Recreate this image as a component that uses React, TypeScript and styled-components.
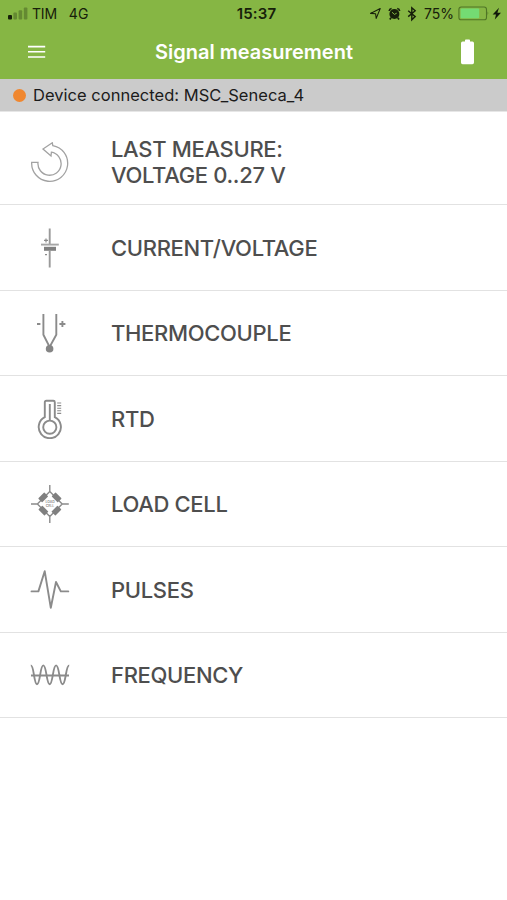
import React from 'react';
import styled, { createGlobalStyle } from 'styled-components';

const colors = {
  green: '#86b644',
  banner: '#cbcbcb',
  orange: '#f0872f',
  text: '#4e4e4e',
  icon: '#8b8b8b',
  line: '#e2e2e2',
};

const GlobalStyle = createGlobalStyle`
  * {
    box-sizing: border-box;
  }

  body {
    margin: 0;
    background: #fff;
    font-family: Inter, 'Liberation Sans', sans-serif;
  }

  svg {
    display: block;
    flex: none;
  }
`;

const Screen = styled.div`
  width: 507px;
  height: 900px;
  background: #fff;
  overflow: hidden;
`;

const Header = styled.header`
  height: 79px;
  background: ${colors.green};
`;

const StatusBar = styled.div`
  display: grid;
  grid-template-columns: 1fr auto 1fr;
  align-items: center;
  height: 27px;
  padding: 0 5px 0 8px;
  font-size: 14px;
  line-height: 27px;
  color: #17200a;
`;

const StatusGroup = styled.div<{ $end?: boolean }>`
  display: flex;
  align-items: center;
  justify-content: ${({ $end }) => ($end ? 'flex-end' : 'flex-start')};
`;

const Carrier = styled.span`
  margin-left: 4px;
  letter-spacing: -0.2px;
`;

const Network = styled.span`
  margin-left: 12px;
  letter-spacing: 0.2px;
`;

const Clock = styled.span`
  padding-left: 3px;
  font-size: 15px;
  font-weight: 600;
  letter-spacing: 0.2px;
`;

const Percent = styled.span`
  margin: 0 4px 0 7px;
`;

const NavBar = styled.nav`
  display: grid;
  grid-template-columns: 27px 1fr 27px;
  align-items: center;
  height: 51px;
  padding: 0 26px 2px;
`;

const IconButton = styled.button<{ $start?: boolean }>`
  display: flex;
  justify-content: ${({ $start }) => ($start ? 'flex-start' : 'center')};
  padding: 0 0 0 ${({ $start }) => ($start ? '2px' : '0')};
  border: 0;
  background: none;
`;

const Title = styled.h1`
  margin: 0;
  padding: 2px 0 0 1px;
  font-size: 20px;
  font-weight: 600;
  line-height: 47px;
  text-align: center;
  color: #fff;
`;

const Banner = styled.div`
  display: flex;
  align-items: center;
  gap: 7px;
  height: 33px;
  padding-left: 13px;
  border-bottom: 1px solid #e6e6e6;
  background: ${colors.banner};
  font-size: 16.5px;
  letter-spacing: 0.02px;
  color: #1b1b1b;
`;

const Dot = styled.span`
  width: 13px;
  height: 13px;
  border-radius: 50%;
  background: ${colors.orange};
`;

const List = styled.ul`
  margin: 0;
  padding: 0;
  list-style: none;
`;

const Row = styled.li<{ $tall?: boolean }>`
  display: flex;
  align-items: center;
  gap: 41px;
  height: ${({ $tall }) => ($tall ? '93px' : '85.5px')};
  padding: ${({ $tall }) => ($tall ? '8px' : '1px')} 30px 0;
  border-bottom: 1px solid ${colors.line};
`;

const Label = styled.span`
  font-size: 22px;
  font-weight: 500;
  line-height: 26px;
  letter-spacing: -0.33px;
  white-space: pre-line;
  color: ${colors.text};
`;

const Glyph = styled.svg.attrs({ width: 40, height: 40, viewBox: '0 0 40 40' })`
  fill: none;
  stroke: ${colors.icon};
  stroke-width: 1.9;
`;

const LastIcon = () => (
  <Glyph>
    <path
      strokeWidth="1.3"
      stroke="#a2a2a2"
      d="M1.7 20.3A18 18 0 1 0 22.8 3.6L22.3.8 13 7l8 7 .4-3.8A11.6 11.6 0 1 1 8 20.3Z"
    />
  </Glyph>
);

const CurrentIcon = () => (
  <Glyph>
    <path d="M19.7 .5V17M19.7 23V39.5" stroke="#9a9a9a" />
    <path d="M11 16.6H28.8" stroke="#a6a6a6" />
    <path d="M14 20.8H26" strokeWidth="4" stroke="#808080" />
    <path d="M14 12.4h4M16 10.4v4M15 26.7h2" strokeWidth="1.2" />
  </Glyph>
);

const ThermocoupleIcon = () => (
  <Glyph>
    <path d="M13.4 1V21.8L19.6 34 26.3 21.8V1" />
    <circle cx="19.6" cy="35.8" r="3.8" fill="#858585" stroke="none" />
    <path d="M7 11h3.4M29.4 11h6M32.4 8v6" />
  </Glyph>
);

const RtdIcon = () => (
  <Glyph>
    <path d="M14.8 18.2V3.2Q14.8 1.7 16.3 1.7H23.3Q24.8 1.7 24.8 3.2V18.2A11.1 11.1 0 1 1 14.8 18.2Z" />
    <circle cx="19.8" cy="28.2" r="6.6" />
    <path d="M19.8 5V21.5" />
    <path d="M27.2 4h4M27.2 6.6h4M27.2 9.2h4M27.2 11.8h4M27.2 14.4h4" strokeWidth="1.1" />
  </Glyph>
);

const CellText = styled.text`
  font-size: 3.4px;
  font-weight: 600;
  text-anchor: middle;
  fill: ${colors.icon};
  stroke: none;
`;

const resistors = [
  { x: 13.2, y: 13.4, angle: -45 },
  { x: 26.6, y: 13.4, angle: 45 },
  { x: 13.4, y: 26.6, angle: 45 },
  { x: 26.4, y: 26.6, angle: -45 },
];

const LoadCellIcon = () => (
  <Glyph>
    <path
      d="M19.8 1V7.6M19.8 32.4V39M1 20H7.4M32.2 20H38.8M19.8 7.6 32.2 20 19.8 32.4 7.4 20Z"
      strokeWidth="1.4"
    />
    {resistors.map(({ x, y, angle }) => (
      <rect
        key={`${x}-${y}`}
        x={-4.3}
        y={-2.8}
        width={8.6}
        height={5.6}
        rx={0.6}
        fill="#808080"
        stroke="none"
        transform={`translate(${x} ${y}) rotate(${angle})`}
      />
    ))}
    <CellText x="20" y="19.2">LOAD</CellText>
    <CellText x="20" y="23.4">CELL</CellText>
  </Glyph>
);

const PulsesIcon = () => (
  <Glyph strokeLinejoin="round" strokeLinecap="round">
    <path d="M1.5 21.4H8.4L14.7 1.2 20.8 37.8 26 12 30.8 21.4H38.3" />
  </Glyph>
);

const FrequencyIcon = () => (
  <Glyph>
    <path d="M1 20.5H39" />
    <path d="M.8 10.4C4.2 10.4 3.7 29.2 7 29.2S10 10.4 13.3 10.4 16.4 29.2 19.7 29.2 22.7 10.4 26.1 10.4 29.2 29.2 32.6 29.2 35.6 10.4 39.2 10.4" />
  </Glyph>
);

const SignalIcon = () => (
  <svg width="20" height="13" viewBox="0 0 20 13" fill="#17200a">
    <rect x="0" y="8" width="4" height="4.6" rx="1" />
    <rect x="5.4" y="5.6" width="3.6" height="7" rx="1" opacity=".3" />
    <rect x="10.6" y="3.2" width="3.6" height="9.4" rx="1" opacity=".3" />
    <rect x="15.8" y="0.6" width="3.6" height="12" rx="1" opacity=".3" />
  </svg>
);

const StatusIcons = () => (
  <svg width="48" height="16" viewBox="0 0 48 16" fill="none" stroke="#17200a">
    <path d="M1.5 7.4 11.2 2.6 7.2 12.4 6.6 7.8Z" strokeWidth="1.1" strokeLinejoin="round" />
    <circle cx="25.4" cy="8" r="5" fill="#17200a" stroke="none" />
    <path d="M20.2 5Q20.4 2.9 22.6 2.5M28.2 2.5Q30.4 2.9 30.6 5M22 11.8l-1.2 1.6M28.8 11.8l1.2 1.6" strokeWidth="1.7" />
    <path d="M23 6.2 25.4 8.4 27.7 7.2" stroke={colors.green} strokeWidth="1" />
    <path d="M39.2 4.8 46.2 10.6 42.8 13.8V1.8L46.2 4.8 39.2 10.6" strokeWidth="1.4" />
  </svg>
);

const BatteryIcon = () => (
  <svg width="44" height="15" viewBox="0 0 44 15">
    <rect x=".9" y="1" width="27.6" height="12.8" rx="2.4" fill="none" stroke="#4f7426" strokeWidth="1.1" />
    <rect x="2.6" y="2.6" width="18.6" height="9.6" rx="1" fill="#74db73" />
    <path d="M29.6 5.2Q31.4 7.4 29.6 9.6Z" fill="#4f7426" />
    <path d="M41 1.8 34.6 8.4H38L36.8 13.4 43 6.8H39.4Z" fill="#10180a" />
  </svg>
);

const MenuIcon = () => (
  <svg width="18" height="14" viewBox="0 0 18 14" stroke="#fff" strokeWidth="1.6">
    <path d="M0 1.6H17.2M0 6.8H17.2M0 12H17.2" />
  </svg>
);

const DeviceBatteryIcon = () => (
  <svg width="13" height="26" viewBox="0 0 13 26" fill="#fff">
    <path d="M4 2.6V1.4Q4 .6 4.8 .6H8.2Q9 .6 9 1.4V2.6H11.4Q13 2.6 13 4.2V23.6Q13 25.2 11.4 25.2H1.6Q0 25.2 0 23.6V4.2Q0 2.6 1.6 2.6Z" />
  </svg>
);

const items = [
  { label: 'LAST MEASURE:\nVOLTAGE 0..27 V', icon: LastIcon, tall: true },
  { label: 'CURRENT/VOLTAGE', icon: CurrentIcon },
  { label: 'THERMOCOUPLE', icon: ThermocoupleIcon },
  { label: 'RTD', icon: RtdIcon },
  { label: 'LOAD CELL', icon: LoadCellIcon },
  { label: 'PULSES', icon: PulsesIcon },
  { label: 'FREQUENCY', icon: FrequencyIcon },
];

const App: React.FC = () => {
  return (
    <Screen>
      <GlobalStyle />
      <Header>
        <StatusBar>
          <StatusGroup>
            <SignalIcon />
            <Carrier>TIM</Carrier>
            <Network>4G</Network>
          </StatusGroup>
          <Clock>15:37</Clock>
          <StatusGroup $end>
            <StatusIcons />
            <Percent>75%</Percent>
            <BatteryIcon />
          </StatusGroup>
        </StatusBar>
        <NavBar>
          <IconButton $start aria-label="Menu">
            <MenuIcon />
          </IconButton>
          <Title>Signal measurement</Title>
          <IconButton aria-label="Device battery">
            <DeviceBatteryIcon />
          </IconButton>
        </NavBar>
      </Header>
      <Banner>
        <Dot />
        Device connected: MSC_Seneca_4
      </Banner>
      <List>
        {items.map(({ label, icon: Icon, tall }) => (
          <Row key={label} $tall={tall}>
            <Icon />
            <Label>{label}</Label>
          </Row>
        ))}
      </List>
    </Screen>
  );
};

export default App;
